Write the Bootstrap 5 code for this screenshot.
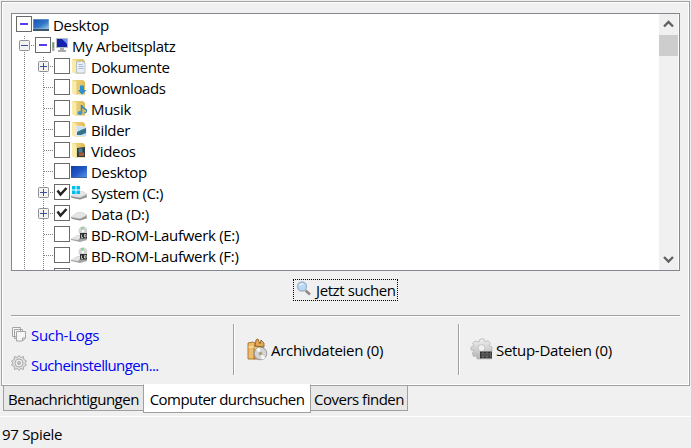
<!DOCTYPE html>
<html lang="de">
<head>
<meta charset="utf-8">
<meta name="viewport" content="width=device-width, initial-scale=1">
<title>Computer durchsuchen</title>
<link href="https://cdn.jsdelivr.net/npm/bootstrap@5.3.0/dist/css/bootstrap.min.css" rel="stylesheet">
<style>
body{width:691px;height:448px;background:#f0f0f0;color:#000;font:15px/21px "Open Sans","Noto Sans",sans-serif;letter-spacing:-.3px;white-space:nowrap}
svg{flex:none;display:block}
.panel{height:385px;margin:1px 1px 0;border:1px solid #a0a0a0;box-shadow:inset 0 0 0 1px #fff;padding:11px 9px 0}
.tree-box{height:258px;border:1px solid #828790;background:#fff}
.tree ul{margin:0;padding:0;list-style:none}
.dots-v{background:linear-gradient(#808080 50%,transparent 50%) 12px 1px/1px 2px repeat-y}
.dots-v2{background:linear-gradient(#808080 50%,transparent 50%) 31px 1px/1px 2px repeat-y}
.node{display:flex;height:21px;padding-top:2px}
.node.root{padding-left:4px}
.node.l1{padding-left:7px}
.node.l2{padding-left:26px}
.node.leaf{padding-left:31px}
.exp{width:11px;height:11px;margin-top:3px}
.link-h{width:5px;height:1px;margin-top:8px;background:linear-gradient(90deg,transparent 50%,#808080 50%) 0 0/2px 1px}
.leaf .link-h{width:11px}
.box{width:16px;height:16px;border:1px solid #6a6a6a;background:#fff;margin-right:1px;flex:none}
.node>span{line-height:19px;margin-left:4px}
.tight{letter-spacing:-.42px}
.sb{width:19px;background:#f0f0f0;margin-right:1px}
.thumb{height:21px;background:#cdcdcd}
.go-row{padding-top:8px;height:44px}
.go{width:105px;height:22px;border:1px dotted #000;border-radius:0;background:none;font-size:15px;line-height:20px;letter-spacing:-.4px;color:#000}
.go svg{margin:-3px 4px 0 2px}
.rule{height:2px;background:#a0a0a0;border-bottom:1px solid #fff}
.vr-line{width:2px;height:51px;background:#a0a0a0;border-right:1px solid #fff}
.lower{padding-top:7px}
.links{width:222px;padding-top:1px;gap:9px}
.links a{color:#0000f5;text-decoration:none;height:21px}
.links svg{margin-right:4px}
.cell-a{width:223px;padding-left:11px;gap:3px}
.cell-b{padding-left:10px;gap:3px}
.tabs{padding-left:3px;margin-top:-1px;height:31px}
.tabs a{color:#000;text-decoration:none;border:1px solid #a0a0a0;height:26px;line-height:27px;background:#e8e8e8;text-align:center;letter-spacing:-.5px}
.tabs a.on{height:29px;margin:-1px -1px 0;background:#fff;border-top-color:#fff;line-height:29px;z-index:1;letter-spacing:-.56px}
.status{border-top:1px solid #fff;height:32px;padding:7px 0 0 2px}
</style>
<script src="https://cdn.jsdelivr.net/npm/bootstrap@5.3.0/dist/js/bootstrap.bundle.min.js"></script>
</head>
<body class="overflow-hidden">
<svg width="0" height="0" class="position-absolute" aria-hidden="true">
<defs>
<linearGradient id="gBlue" x2="1" y2="1"><stop stop-color="#1c54a8"/><stop offset=".55" stop-color="#2f74c8"/><stop offset="1" stop-color="#8fc4ea"/></linearGradient>
<linearGradient id="gNavy" x2="1" y2="1"><stop stop-color="#0c3fa0"/><stop offset=".5" stop-color="#2159c9"/><stop offset="1" stop-color="#5c9ae8"/></linearGradient>
<linearGradient id="gFold" x2="1"><stop stop-color="#f3dc8c"/><stop offset="1" stop-color="#dfba55"/></linearGradient>
<linearGradient id="gBox" x2="1" y2="1"><stop stop-color="#f5cd85"/><stop offset="1" stop-color="#c98a38"/></linearGradient>
<linearGradient id="gGrey" x2="0" y2="1"><stop stop-color="#eee"/><stop offset="1" stop-color="#b4b4b4"/></linearGradient>
<g id="plus"><rect x=".5" y=".5" width="10" height="10" rx="1" fill="#f3f3f3" stroke="#919191"/><path d="M2 5.500h7M5.500 2v7" stroke="#3b4fa0"/></g>
<g id="minus"><rect x=".5" y=".5" width="10" height="10" rx="1" fill="#f3f3f3" stroke="#919191"/><path d="M2 5.500h7" stroke="#3b4fa0"/></g>
<g id="folder"><path d="M1 1h11l2 2v12.500H4L1 14z" fill="url(#gFold)"/><path d="M1 1l5 2.500v12.500L1 14z" fill="#faebab"/><path d="M6 3.500v12" stroke="#d9bd68" stroke-width=".7"/></g>
<g id="drive"><path d="M0 12l6-4.500h6l4 2.500v3.500l-7 2-9-2z" fill="#a9a9a9"/><path d="M0 12l6-4.500h6l4 2.500-7 3.500z" fill="#e4e4e4"/><path d="M1 13.500l8 1.500 6-2.500" stroke="#777" fill="none" stroke-width=".6"/></g>
<g id="bd"><path d="M0 13l7-4 8 1 1 4-7 2-9-2z" fill="#a4a4a4"/><path d="M0 13l7-4 4 1-4 4z" fill="#e4e4e4"/><circle cx="12" cy="5" r="4.500" fill="#d0d3d0"/><path d="M9.500 1.500l2.500 3.500 1-4.500" fill="#95cba3"/><circle cx="12" cy="5" r="1.200" fill="#fff"/><path d="M9 7h7v5.500H9z" fill="#303030"/><path d="M10.500 8.500v3h1.500M13.500 8.500h1.500v2.500h-1.500z" stroke="#ddd" fill="none" stroke-width=".8"/></g>
</defs>
</svg>
<main class="panel">
  <div class="tree-box d-flex overflow-hidden">
    <div class="tree flex-grow-1">
      <div class="node root"><svg class="box" viewBox="1 1 14 14"><path d="M4 8h8" stroke="#5a3cf0" stroke-width="2"/></svg>
        <svg width="16" height="16" viewBox="0 0 16 16"><path d="M0 3h16v12H0z" fill="#9ab4cc"/><path d="M.5 3.500h15v9H.5z" fill="url(#gBlue)"/><path d="M0 13h16v2H0z" fill="#3b566e"/></svg><span>Desktop</span></div>
      <ul class="dots-v">
        <li>
          <div class="node l1"><svg class="exp"><use href="#minus"/></svg><i class="link-h"></i><svg class="box" viewBox="1 1 14 14"><path d="M4 8h8" stroke="#5a3cf0" stroke-width="2"/></svg>
            <svg width="16" height="16" viewBox="0 0 16 16"><path d="M0 5h2.500v9H0z" fill="#aaa"/><path d="M1.200 6v5" stroke="#35bd35"/><path d="M4 1h12v10H4z" fill="#b7bdc4"/><path d="M5 2h10v8H5z" fill="#1522ad"/><path d="M10 2h5v5z" fill="#7292ee"/><path d="M8 11h4v2H8zM6 13h8v2H6z" fill="#aaa"/></svg><span>My Arbeitsplatz</span></div>
          <ul class="dots-v2">
            <li class="node l2"><svg class="exp"><use href="#plus"/></svg><i class="link-h"></i><i class="box"></i><svg width="16" height="16"><use href="#folder"/><path d="M5.500 4l5-1 3.500 2v10H5.500z" fill="#e9eff4" stroke="#9fb2c4" stroke-width=".7"/><path d="M7.500 6.500h4M7.500 8.500h5M7.500 10.500h5" stroke="#88a5c4" stroke-width=".7"/></svg><span class="tight">Dokumente</span></li>
            <li class="node leaf"><i class="link-h"></i><i class="box"></i><svg width="16" height="16"><use href="#folder"/><path d="M9 6.500h4V11h2.500L11 15.800 7 11h2z" fill="#2b91d0"/></svg><span class="tight">Downloads</span></li>
            <li class="node leaf"><i class="link-h"></i><i class="box"></i><svg width="16" height="16"><use href="#folder"/><path d="M10.500 13V5q0 2 3.500 4t-.5 4" fill="none" stroke="#3687bd" stroke-width="1.500"/><ellipse cx="9" cy="13" rx="2.500" ry="2" fill="#4197c9"/></svg><span>Musik</span></li>
            <li class="node leaf"><i class="link-h"></i><i class="box"></i><svg width="16" height="16"><use href="#folder"/><path d="M5.500 5l10 1v9h-10z" fill="#c4e1f3" stroke="#eef" stroke-width=".7"/><path d="M6 11l4-2 5-2v5l-5 2H6z" fill="#34748f"/></svg><span>Bilder</span></li>
            <li class="node leaf"><i class="link-h"></i><i class="box"></i><svg width="16" height="16"><use href="#folder"/><path d="M6 6l8-1v10H6z" fill="#333c45"/><path d="M7.500 6.500h4v4h-4z" fill="#438295"/><path d="M8 10.500h5V14H8z" fill="#a55d38"/></svg><span>Videos</span></li>
            <li class="node leaf"><i class="link-h"></i><i class="box"></i><svg width="16" height="16"><path d="M0 3h16v12H0z" fill="url(#gNavy)"/><path d="M0 14.500h16" stroke="#40638f"/></svg><span>Desktop</span></li>
            <li class="node l2"><svg class="exp"><use href="#plus"/></svg><i class="link-h"></i><svg class="box" viewBox="1 1 14 14"><path d="M3.500 6.500l3 4L12.500 4" fill="none" stroke="#222" stroke-width="2.500"/></svg><svg width="16" height="16"><use href="#drive"/><path d="M1 2h3.500v3.500H1zM5.500 2H9v3.500H5.500zM1 6.500h3.500V10H1zM5.500 6.500H9V10H5.500z" fill="#00bdf2"/></svg><span class="tight">System (C:)</span></li>
            <li class="node l2"><svg class="exp"><use href="#plus"/></svg><i class="link-h"></i><svg class="box" viewBox="1 1 14 14"><path d="M3.500 6.500l3 4L12.500 4" fill="none" stroke="#222" stroke-width="2.500"/></svg><svg width="16" height="16"><use href="#drive"/></svg><span>Data (D:)</span></li>
            <li class="node leaf"><i class="link-h"></i><i class="box"></i><svg width="16" height="16"><use href="#bd"/></svg><span>BD-ROM-Laufwerk (E:)</span></li>
            <li class="node leaf"><i class="link-h"></i><i class="box"></i><svg width="16" height="16"><use href="#bd"/></svg><span>BD-ROM-Laufwerk (F:)</span></li>
            <li class="node leaf"><i class="link-h"></i><i class="box"></i></li>
          </ul>
        </li>
      </ul>
    </div>
    <div class="sb d-flex flex-column">
      <svg width="19" height="21"><path d="M5 12.500l4.500-4.500 4.500 4.500" fill="none" stroke="#606060" stroke-width="2.300"/></svg>
      <div class="thumb"></div>
      <svg class="mt-auto" width="19" height="21"><path d="M5 8l4.500 4.500L14 8" fill="none" stroke="#606060" stroke-width="2.300"/></svg>
    </div>
  </div>
  <div class="go-row d-flex justify-content-center"><button class="go btn p-0 d-flex align-items-center"><svg width="16" height="16" viewBox="0 0 16 16"><path d="M9.500 9.500l4.500 4" stroke="#8d8984" stroke-width="2.500"/><circle cx="6" cy="5.500" r="4.500" fill="#b9d8f3" stroke="#9db5cd" stroke-width="1.300"/><path d="M3.500 5q1-3 4-2" stroke="#fff" fill="none"/></svg>Jetzt suchen</button></div>
  <div class="rule"></div>
  <div class="lower d-flex">
    <div class="links d-flex flex-column">
      <a href="#" class="d-flex"><svg width="16" height="17" viewBox="0 -1 16 17" fill="#f6f6f6" stroke="#a4a4a4"><path d="M1.500 1.500h8v9h-8zM3.500 3.500h8v9h-8z"/><path d="M5.500 5.500h9v6.500l-3 3h-6zM14.500 12h-3v3"/></svg>Such-Logs</a>
      <a href="#" class="d-flex tight"><svg width="16" height="16" viewBox="0 0 16 16" fill="#e0e0e0" stroke="#a4a4a4" stroke-width=".9"><path d="M6.500 2.500L8 .5l1.500 2 3-1 .2 2.800 2.800 1.700-1.500 2 1.500 2-2.800 1.500-.2 3-3-1L8 15.500l-1.500-2-3 1-.2-3L.5 10 2 8 .5 6l2.800-1.700.2-2.800z"/><circle cx="8" cy="8" r="4" fill="#eee"/><circle cx="8" cy="8" r="1.500" fill="#ccc"/></svg><span style="letter-spacing:-.6px">Sucheinstellungen...</span></a>
    </div>
    <div class="vr-line"></div>
    <div class="cell-a d-flex align-items-center"><svg width="22" height="24" viewBox="0 0 22 24"><path d="M2 5l5-1 2 1v16H2z" fill="#eebd6c" stroke="#99621f" stroke-width=".8"/><path d="M8 8h9v13H8z" fill="url(#gBox)" stroke="#99621f" stroke-width=".8"/><path d="M9 8l1-6 2-1 2 5 1-4 3 3v4z" fill="#e3aa55" stroke="#84541f" stroke-width=".8"/><path d="M2.500 9h6" stroke="#fff0ba"/><circle cx="14.500" cy="15.500" r="6.300" fill="#d4d4d4" stroke="#888" stroke-width=".8"/><path d="M14.500 15.500L10 11.500a6 6 0 0 1 4-2zM14.500 15.500l5 4a6 6 0 0 1-4 2z" fill="#f8f8f8"/><circle cx="14.500" cy="15.500" r="1.500" fill="#b5955c" stroke="#aaa"/></svg><span>Archivdateien (0)</span></div>
    <div class="vr-line"></div>
    <div class="cell-b d-flex align-items-center"><svg width="23" height="24" viewBox="0 0 23 24"><path d="M9 4l1-3h4l1 3 3-1.500 2.500 3L19 8l3 1v4l-3 1v5l-6-1-3 3H7l-.5-3-3 .5L2 15l2-2-3-1V9l3-1-1.500-3L5 3z" fill="url(#gGrey)" stroke="#b8b8b8" stroke-width=".8"/><circle cx="11.500" cy="10" r="3.500" fill="#f0f0f0" stroke="#c4c4c4"/><path d="M10 13.500h12V20.500H10z" fill="#333"/><path d="M12 15v4h2v-4zM16 15v4h2v-4zM21.500 15h-1.500v2h1v2h-1.500" fill="none" stroke="#888" stroke-width=".7"/><path d="M8 21.500h14" stroke="#ddd"/></svg><span>Setup-Dateien (0)</span></div>
  </div>
</main>
<nav class="tabs d-flex align-items-start"><a href="#" style="width:141px">Benachrichtigungen</a><a href="#" class="on position-relative" style="width:168px">Computer durchsuchen</a><a href="#" style="width:98px">Covers finden</a></nav>
<footer class="status">97 Spiele</footer>
</body>
</html>
